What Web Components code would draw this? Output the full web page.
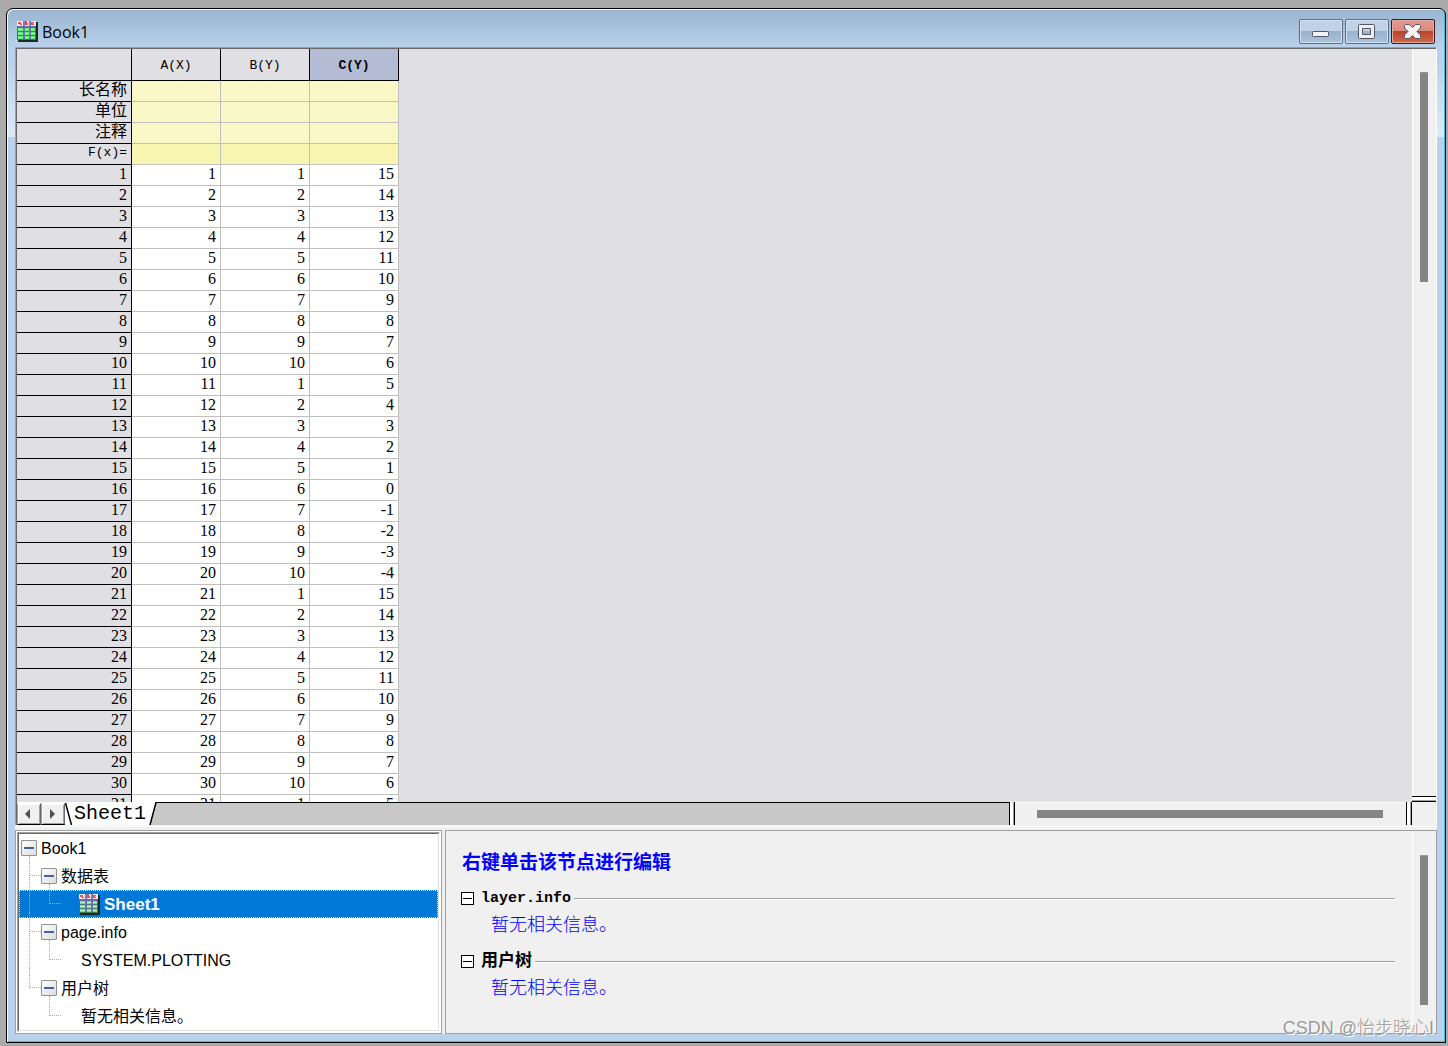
<!DOCTYPE html>
<html lang="zh-CN">
<head>
<meta charset="utf-8">
<title>Book1</title>
<style>
html, body { height: 100%; margin: 0; }
body {
  box-sizing: border-box; padding: 8px 2px 3px 6px; background: #ababab; overflow: hidden;
  font-family: "Liberation Sans", "Noto Sans CJK SC", sans-serif; font-size: 16px; color: #000;
}
</style>
</head>
<body>
<book-window>
  <title-bar slot="title" label="Book1"></title-bar>
  <work-area>
    <sheet-grid slot="grid"></sheet-grid>
    <sheet-tabs slot="tabs" label="Sheet1"></sheet-tabs>
  </work-area>
  <tree-panel slot="tree">
    <tree-item label="Book1" depth="0" open>
      <tree-item label="数据表" depth="1" open more>
        <tree-item label="Sheet1" depth="2" selected icon></tree-item>
      </tree-item>
      <tree-item label="page.info" depth="1" open more>
        <tree-item label="SYSTEM.PLOTTING" depth="2"></tree-item>
      </tree-item>
      <tree-item label="用户树" depth="1" open>
        <tree-item label="暂无相关信息。" depth="2"></tree-item>
      </tree-item>
    </tree-item>
  </tree-panel>
  <info-panel slot="info" heading="右键单击该节点进行编辑">
    <info-section heading="layer.info">暂无相关信息。</info-section>
    <info-section heading="用户树">暂无相关信息。</info-section>
  </info-panel>
</book-window>
<water-mark>CSDN @怡步晓心I</water-mark>

<script>
function define(name, render) {
  customElements.define(name, class extends HTMLElement {
    connectedCallback() {
      if (this.shadowRoot) return;
      this.attachShadow({ mode: 'open' }).innerHTML =
        '<style>*,*::before,*::after{box-sizing:border-box}:host{display:block;box-sizing:border-box}</style>' + render(this);
    }
  });
}

define('book-icon', () => `
<style>:host{width:21px;height:21px;flex:none} svg{display:block}</style>
<svg width="21" height="21" viewBox="0 0 21 21" aria-hidden="true">
  <path fill="#1c2a24" d="M1 1h20v20H1z"/>
  <path fill="#62e878" d="M0 0h19v19H0z"/>
  <path fill="#fbe9ea" d="M0 0h19v5H0z"/>
  <path fill="#ee4a50" d="M1 1h3v2h1v1H3V3H1zM8 0h2v2h1v2H8zM14 1h3v1h-1v1h1v1h-3z"/>
  <path fill="#b5f5bd" d="M1 8h5v1H1zM8 8h4v1H8zM14 8h4v1h-4zM1 12h5v1H1zM8 12h4v1H8zM14 12h4v1h-4zM1 16h5v1H1zM8 16h4v1H8zM14 16h4v1h-4z"/>
  <path fill="#6d68ae" d="M0 5h19v2H0z"/>
  <path fill="#4d7f80" d="M0 10h19v1H0zM0 14h19v1H0z"/>
  <path fill="#6464ae" d="M6 0h2v19H6zM12 0h2v19h-2z" opacity=".85"/>
  <path fill="#3f7a50" d="M0 5h1v14H0zM0 18h19v1H0zM18 5h1v14h-1z"/>
</svg>`);

define('title-bar', el => `
<style>
:host{height:37px;padding:9px 9px 0 8px}
.bar{display:flex;align-items:flex-start}
book-icon{margin:2px 4px 0 1px}
h1{flex:1;margin:0;font:400 16px/26px "Open Sans","Noto Sans",sans-serif}
.btns{display:flex;gap:2px}
button{width:44px;height:25px;padding:0;border:1px solid #5c6f8a;border-radius:2px;
  box-shadow:inset 0 0 0 1px #d3e1f1;background:linear-gradient(#bfd2e8 0 11px,#98b0cc 11px,#aac3df)}
button.close{border-color:#431422;box-shadow:inset 0 0 0 1px #e5aaa2;background:linear-gradient(#e29a8e 0,#db8a7c 11px,#b7422b 11px,#cf6a4e)}
svg{display:block;margin:0 0 0 11px}
</style>
<div class="bar"><book-icon></book-icon><h1>${el.getAttribute('label')}</h1>
<div class="btns">
<button aria-label="Minimize"><svg width="20" height="20"><rect x="1.5" y="9.500" width="16" height="5" rx="1" fill="#f1f1f1" stroke="#535666"/></svg></button>
<button aria-label="Maximize"><svg width="20" height="20"><path fill="#efefef" stroke="#535666" fill-rule="evenodd" d="M1.500 3.500a1 1 0 0 1 1-1h14a1 1 0 0 1 1 1v12a1 1 0 0 1-1 1h-14a1 1 0 0 1-1-1zM5.500 6.500v6h8v-6z"/></svg></button>
<button class="close" aria-label="Close"><svg width="20" height="20"><path fill="#f2f2f2" stroke="#535666" stroke-linejoin="round" d="M2.500 2.500h4l3 3 3-3h4l1 1v2.500l-3.500 3.500 3.500 3.500v2.500l-1 1h-4l-3-3-3 3h-4l-1-1v-2.500l3.500-3.500-3.500-3.500v-2.500z"/></svg></button>
</div></div>`);

define('scroll-bar', el => `
<style>
:host{background:#f0f0f0;display:flex}
.v{width:24px;flex:1;border-left:1px solid #fff;padding:var(--start,23px) 8px 0 7px}
.v i{display:block;height:var(--size,29%);background:#858585;border-top:1px solid #9a9a9a}
.h{flex:1;border-top:1px solid #fff;padding:7px 23px 0 22px}
.h i{display:block;height:8px;background:#858585}
</style>
<div class="${el.hasAttribute('horizontal') ? 'h' : 'v'}" role="scrollbar"><i></i></div>`);

define('split-bar', () => `
<style>
:host{flex:none;background:#fff}
:host([vertical]){width:6px;border-left:1px solid #000;border-right:1px solid #000;box-shadow:inset -1px 0 #a0a0a0}
:host(:not([vertical])){height:6px;border-top:1px solid #000;border-bottom:1px solid #000;box-shadow:inset 0 -1px #a0a0a0}
</style>`);

define('sheet-grid', () => {
  const metas = ['长名称', '单位', '注释', 'F(x)='];
  let body = metas.map((m, i) => `<tr class="meta${i === 3 ? ' fx' : ''}"><th scope="row">${m}</th><td></td><td></td><td></td></tr>`).join('');
  for (let i = 0; i < 31; i++)
    body += `<tr><th scope="row">${i + 1}</th><td>${i + 1}</td><td>${i % 10 + 1}</td><td>${15 - i % 20}</td></tr>`;
  return `
<style>
:host{background:#e0dfe4;overflow:hidden;min-height:0}
table{border-collapse:separate;border-spacing:0;table-layout:fixed;width:382px}
col{width:89px} col.head{width:115px}
th,td{height:21px;padding:0 4px 2px 0;border:solid #c0c0c0;border-width:0 1px 1px 0;background:#fff;
  text-align:right;vertical-align:middle;white-space:nowrap;font:400 16px/18px "Liberation Serif","Noto Sans CJK SC",serif}
th{background:#e0dfe4;border-color:#000;font-weight:400}
thead th{height:32px;padding:2px 0 0;text-align:center;font:400 13px/20px "Liberation Mono",monospace}
thead th.active{background:#b4bbd4;font-weight:700}
tr.meta td{background:#fbf8c8}
tr.fx td{background:#f7f5b0}
tr.fx th{font:400 13px/18px "Liberation Mono",monospace}
</style>
<table><colgroup><col class="head"><col><col><col></colgroup>
<thead><tr><th></th><th scope="col">A(X)</th><th scope="col">B(Y)</th><th scope="col" class="active">C(Y)</th></tr></thead>
<tbody>${body}</tbody></table>`;
});

define('sheet-tabs', el => `
<style>
:host{display:flex;background:#fff;min-width:0}
.nav{display:flex;padding-top:1px}
.nav button{width:24px;height:22px;padding:0;background:#f0f0f0;border:1px solid;border-color:#fff #696969 #000 #a0a0a0;box-shadow:inset 1px 1px #fff,inset -1px -1px #a0a0a0}
svg{display:block;flex:none} .nav svg{margin:auto}
.tab{border:0;padding:1px 0 0 1px;background:#fff;font:400 20px/22px "Liberation Mono",monospace;color:#000}
.rest{flex:1;background:#c8c8c8;border-top:1px solid #000}
</style>
<div class="nav">
<button aria-label="Previous sheet"><svg width="8" height="10"><path fill="#505050" d="M0 5l5-5v10z"/></svg></button>
<button aria-label="Next sheet"><svg width="8" height="10"><path fill="#505050" d="M6 5l-5-5v10z"/></svg></button>
</div>
<svg width="8" height="23"><path fill="none" stroke="#000" stroke-width="1.500" d="M.5 1l6 22"/></svg>
<button class="tab">${el.getAttribute('label')}</button>
<svg width="11" height="23"><path fill="#c8c8c8" d="M10 0h1v23H4z"/><path fill="none" stroke="#000" stroke-width="1.500" d="M4 23L10 .5h1"/></svg>
<div class="rest"></div>`);

define('work-area', () => `
<style>
:host{display:flex;flex-direction:column;min-height:0}
.top{flex:1;display:flex;min-height:0}
slot[name=grid]::slotted(*){flex:1}
.side{display:flex;flex-direction:column;width:24px}
.side scroll-bar{flex:1}
.bottom{display:flex;height:23px}
slot[name=tabs]::slotted(*){flex:992 1 0}
.bottom scroll-bar{flex:391 1 0}
.corner{width:24px;background:#f0f0f0}
</style>
<div class="top"><slot name="grid"></slot><div class="side"><scroll-bar></scroll-bar><split-bar></split-bar></div></div>
<div class="bottom"><slot name="tabs"></slot><split-bar vertical></split-bar><scroll-bar horizontal></scroll-bar><split-bar vertical></split-bar><div class="corner"></div></div>`);

define('tree-item', el => `
<style>
:host{position:relative}
.row{display:flex;align-items:center;height:28px;padding-left:calc(var(--depth)*20px + 2px);font-size:16px;line-height:26px;white-space:nowrap}
.row span{padding-top:2px}
:host([selected]) .row{background:#0078d7;color:#fff;font-weight:700;font-size:17px;outline:1px dotted #cfe6fa;outline-offset:-1px}
button,.gap{width:16px;height:16px;flex:none;margin-right:4px}
button{padding:0;border:1px solid #919191;border-radius:1px;background:linear-gradient(135deg,#fff,#dcdcdc)}
button i{display:block;width:10px;height:2px;margin:0 auto;background:#4560ab}
book-icon{margin:0 4px 0 -2px}
.v,.h{position:absolute;z-index:1;left:calc(var(--depth)*20px - 10px)}
.v{top:-6px;height:20px;border-left:1px dotted #aaa}
:host([more]) .v{height:auto;bottom:0}
.h{top:13px;width:12px;border-top:1px dotted #aaa}
:host([depth="0"]) .v,:host([depth="0"]) .h{display:none}
</style>
<div class="row" style="--depth:${el.getAttribute('depth')}">
${el.hasAttribute('open') ? '<button aria-label="Collapse"><i></i></button>' : '<b class="gap"></b>'}
${el.hasAttribute('icon') ? '<book-icon></book-icon>' : ''}<span>${el.getAttribute('label')}</span><i class="v"></i><i class="h"></i></div>
<slot></slot>`);

define('tree-panel', () => `
<style>
:host{border:1px solid #a0a0a0;background:#fff;padding:1px;display:flex}
.a{flex:1;display:flex;border:1px solid;border-color:#a0a0a0 #fff #fff #a0a0a0}
.b{flex:1;border:1px solid;border-color:#696969 #e3e3e3 #e3e3e3 #696969;background:#fff;overflow:hidden}
</style><div class="a"><div class="b" role="tree"><slot></slot></div></div>`);

define('info-section', el => `
<style>
.head{display:flex;align-items:center;height:24px}
button{width:13px;height:13px;padding:0;border:1px solid #000;background:#fff;margin-right:7px}
button i{display:block;height:1px;background:#000;margin:0 1px}
h3{margin:0 3px 0 0;padding-top:2px;font:700 15px/24px "Liberation Mono","Noto Sans CJK SC",monospace}
h3.cjk{font-size:17px}
.rule{flex:1;height:2px;margin-top:1px;background:linear-gradient(#a0a0a0 50%,#fff 50%)}
p{margin:0 0 0 30px;padding-top:2px;font-size:18px;line-height:26px;font-weight:300;color:#00f}
</style>
<div class="head"><button aria-label="Collapse"><i></i></button><h3 class="${/^[\x00-\x7f]+$/.test(el.getAttribute('heading')) ? '' : 'cjk'}">${el.getAttribute('heading')}</h3><div class="rule"></div></div>
<p><slot></slot></p>`);

define('info-panel', el => `
<style>
:host{display:flex;background:#f0f0f0;border:1px solid #a0a0a0}
.body{flex:1;display:flex;flex-direction:column;gap:11px;padding:18px 17px 0 15px}
h2{margin:0 0 0 1px;padding-bottom:2px;font:700 19px/24px "Noto Sans CJK SC",sans-serif;color:#00f}
scroll-bar{--start:24px;--size:84%}
</style>
<div class="body"><h2>${el.getAttribute('heading')}</h2><slot></slot></div><scroll-bar></scroll-bar>`);

define('book-window', () => `
<style>
:host{height:100%;border:1px solid #000;border-radius:7px 7px 0 0;overflow:hidden;display:flex;flex-direction:column;
  padding:1px;
  background:linear-gradient(#99b4d1 0,#b9d1ea 38px,#b9d1ea 50px,#dfe9f6 128px,#b9d1ea 128px);
  box-shadow:inset 1px 1px #f4f8fc,inset -1px -1px #35c4de}
.client{flex:1;min-height:0;margin:0 7px;display:flex;flex-direction:column;background:#f0f0f0}
.sheet{flex:1;min-height:0;display:flex;flex-direction:column;border:1px solid;border-color:#a0a0a0 #fff #fff #a0a0a0;border-bottom:0}
.inner{flex:1;min-height:0;display:flex;flex-direction:column;border:solid #696969;border-width:1px 0 0 1px}
.inner slot::slotted(*){flex:1}
.lip{height:2px;border-bottom:1px solid #fff;margin-bottom:3px}
.bottom{display:flex;height:204px;gap:3px}
slot[name=tree]::slotted(*){width:427px;flex:none}
slot[name=info]::slotted(*){flex:1}
.foot{height:7px}
</style>
<slot name="title"></slot>
<div class="client"><div class="sheet"><div class="inner"><slot></slot></div></div><div class="lip"></div>
<div class="bottom"><slot name="tree"></slot><slot name="info"></slot></div></div>
<div class="foot"></div>`);

define('water-mark', () => `
<style>
:host{position:absolute;right:14px;bottom:5px;font:300 18px/26px "Liberation Sans","Noto Sans CJK SC",sans-serif;color:#999;text-shadow:1px 1px #fff;pointer-events:none}
</style><slot></slot>`);
</script>
</body>
</html>
